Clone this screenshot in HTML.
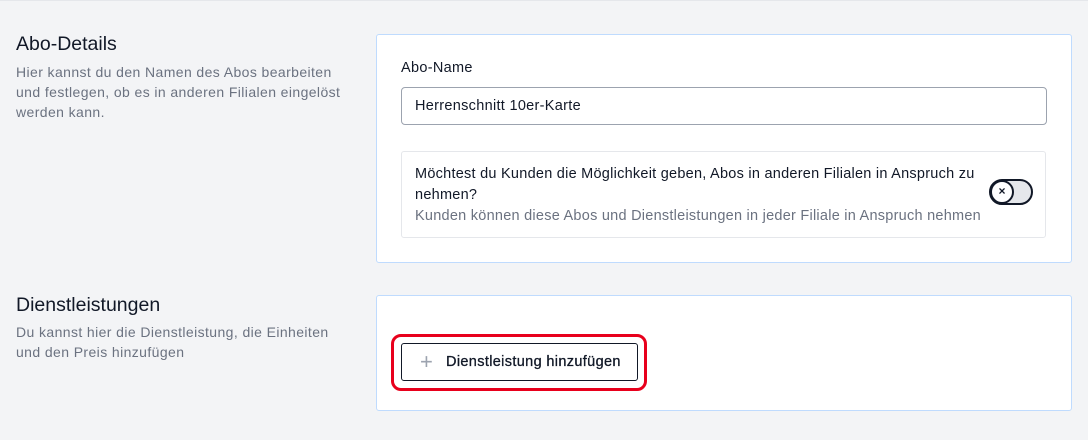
<!DOCTYPE html><html><head><style>
body{margin:0;width:1088px;height:440px;background:#f3f4f6;font-family:"Liberation Sans",sans-serif;position:relative;overflow:hidden;color:#111827}
.top{position:absolute;top:0;left:0;right:0;height:1px;background:#e5e7eb}
.h{position:absolute;left:16px;font-size:19.5px;font-weight:500}
.d{position:absolute;left:16px;font-size:14px;letter-spacing:0.4px;line-height:20px;color:#6b7280;width:360px}
.card{position:absolute;left:376px;width:694px;background:#fff;border:1px solid #bfdbfe;border-radius:3px}
</style></head><body>
<div class="top"></div>
<div class="h" style="top:33px">Abo-Details</div>
<div class="d" style="top:62px">Hier kannst du den Namen des Abos bearbeiten<br>und festlegen, ob es in anderen Filialen eingelöst<br>werden kann.</div>
<div class="h" style="top:294px">Dienstleistungen</div>
<div class="d" style="top:322px">Du kannst hier die Dienstleistung, die Einheiten<br>und den Preis hinzufügen</div>
<div class="card" style="top:34px;height:227px">
<div style="position:absolute;left:24px;top:25px;font-size:14.5px;letter-spacing:0.3px">Abo-Name</div>
<div style="position:absolute;left:24px;top:52px;border:1px solid #9ca3af;border-radius:4px;box-sizing:border-box;width:646px;height:38px;padding-left:13px;line-height:36px;font-size:14.5px;letter-spacing:0.3px">Herrenschnitt 10er-Karte</div>
<div style="position:absolute;left:24px;top:116px;width:645px;height:87px;border:1px solid #e5e7eb;border-radius:3px;box-sizing:border-box">
<div style="position:absolute;left:13px;top:12px;width:575px;font-size:14.5px;letter-spacing:0.25px;line-height:21px">Möchtest du Kunden die Möglichkeit geben, Abos in anderen Filialen in Anspruch zu nehmen?<br><span style="color:#6b7280">Kunden können diese Abos und Dienstleistungen in jeder Filiale in Anspruch nehmen</span></div>
<div style="position:absolute;left:587px;top:27px;width:44px;height:26px;border:2px solid #111827;border-radius:13px;background:#e5e7eb;box-sizing:border-box">
<div style="position:absolute;left:-1px;top:-1px;width:24px;height:24px;border:2px solid #111827;border-radius:50%;background:#fff;box-sizing:border-box;font-size:12px;font-weight:bold;text-align:center;line-height:19px">×</div></div>
</div></div>
<div class="card" style="top:295px;height:114px">
<div style="position:absolute;left:14px;top:38px;width:256px;height:57px;border:3px solid #e8001c;border-radius:10px;box-sizing:border-box"></div>
<div style="position:absolute;left:24px;top:47px;width:237px;height:38px;border:1px solid #111827;border-radius:3px;box-sizing:border-box;font-size:14.5px;letter-spacing:0.35px;line-height:36px;padding-left:44px;-webkit-text-stroke:0.3px #111827">Dienstleistung hinzufügen
<span style="position:absolute;left:18px;top:0;color:#9ca3af;font-size:22px;-webkit-text-stroke:0">+</span></div>
</div>
</body></html>
